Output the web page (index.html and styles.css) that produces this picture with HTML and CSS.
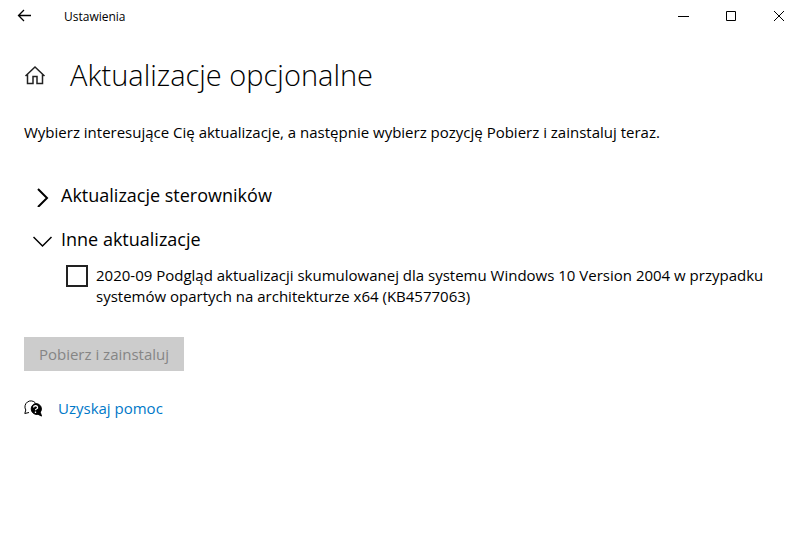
FILE: index.html
```html
<!DOCTYPE html>
<html lang="pl">
<head>
    <meta charset="UTF-8">
    <meta name="viewport" content="width=device-width, initial-scale=1.0">
    <title>Ustawienia</title>
    <link rel="stylesheet" href="styles.css">
</head>
<body>
    <header class="titlebar">
        <button type="button" class="back" aria-label="Wstecz">
            <svg width="14" height="14" viewBox="0 0 14 14"><path d="M14 6.500H1.500M7 1L1.500 6.500 7 12"/></svg>
        </button>
        <span class="app-name">Ustawienia</span>
        <div class="window-buttons">
            <button type="button" aria-label="Minimalizuj">
                <svg width="12" height="12" viewBox="0 0 12 12"><path d="M1 6.500h11"/></svg>
            </button>
            <button type="button" aria-label="Maksymalizuj">
                <svg width="12" height="12" viewBox="0 0 12 12"><path d="M1.500 1.500h9v9h-9z"/></svg>
            </button>
            <button type="button" aria-label="Zamknij">
                <svg width="12" height="12" viewBox="0 0 12 12"><path d="M1 1l10 10M11 1L1 11"/></svg>
            </button>
        </div>
    </header>

    <main class="content">
        <div class="heading">
            <a href="#" class="home" aria-label="Strona główna">
                <svg width="22" height="20" viewBox="0 0 22 20"><path d="M1.500 11L11 2l9.500 9M3.500 9.500V18.500H9v-7h4v7h5.500v-9"/></svg>
            </a>
            <h1>Aktualizacje opcjonalne</h1>
        </div>
        <p class="intro">Wybierz interesujące Cię aktualizacje, a następnie wybierz pozycję Pobierz i zainstaluj teraz.</p>

        <button type="button" class="group" aria-expanded="false">
            <svg class="closed" width="20" height="24" viewBox="0 0 20 24"><path d="M5 6l9 9-9 9"/></svg>
            <span>Aktualizacje sterowników</span>
        </button>
        <button type="button" class="group" aria-expanded="true">
            <svg class="open" width="20" height="24" viewBox="0 0 20 24"><path d="M.5 10l9 9 9-9"/></svg>
            <span>Inne aktualizacje</span>
        </button>
        <label class="update">
            <input type="checkbox">
            <span>2020-09 Podgląd aktualizacji skumulowanej dla systemu Windows 10 Version 2004 w przypadku systemów opartych na architekturze x64 (KB4577063)</span>
        </label>

        <button type="button" class="install" disabled>Pobierz i zainstaluj</button>

        <div class="help">
            <svg width="18" height="18" viewBox="0 0 18 18">
                <path d="M11.500 3A6 6 0 0 0 1.800 10L.8 13.500l4.200-1"/>
                <path class="bubble" d="M11.500 3.500a5.500 5.500 0 1 0 2.500 10.800l3.500 1.800-1.200-3.800a5.500 5.500 0 0 0-4.800-8.800z"/>
                <path class="mark" d="M9.600 7.500a2 1.700 0 1 1 2.800 1.500q-.9.400-.9 1.300M11.500 11.500v1.400"/>
            </svg>
            <a href="#">Uzyskaj pomoc</a>
        </div>
    </main>
</body>
</html>
```

FILE: styles.css
```css
* {
    box-sizing: border-box;
}
body {
    margin: 0;
    background: #fff;
    color: #000;
    font-family: 'Open Sans', 'Noto Sans', sans-serif;
    font-size: 15px;
    line-height: 21px;
}
button {
    padding: 0;
    border: none;
    background: none;
    color: inherit;
    font: inherit;
}
svg {
    flex: none;
    fill: none;
    stroke: #000;
}
.titlebar {
    display: flex;
    align-items: center;
    height: 32px;
    font-size: 12px;
}
.titlebar button {
    display: flex;
    align-items: center;
    justify-content: center;
    width: 42px;
    height: 32px;
}
.titlebar .back {
    width: 48px;
}
.back svg {
    stroke-width: 1.3;
}
.app-name {
    margin-left: 16px;
}
.window-buttons {
    display: flex;
    gap: 6px;
    margin-left: auto;
}
.content {
    padding: 24px;
}
.heading {
    display: flex;
    align-items: center;
    gap: 24px;
}
.home {
    display: flex;
}
.home svg {
    stroke: #222;
    stroke-width: 1.5;
}
h1 {
    margin: 0;
    font-size: 29px;
    font-weight: 300;
    line-height: 38px;
}
.intro {
    margin: 28px 0 30px;
}
.group {
    display: flex;
    align-items: center;
    gap: 8px;
    height: 44px;
    padding-left: 9px;
    font-size: 18px;
}
.closed {
    stroke-width: 2;
}
.open {
    stroke-width: 1.5;
}
.update {
    display: flex;
    gap: 8px;
    margin-top: 4px;
    padding-left: 42px;
}
.update input {
    appearance: none;
    flex: none;
    width: 22px;
    height: 22px;
    margin: 0;
    border: 2px solid #222;
}
.install {
    width: 160px;
    height: 34px;
    margin: 30px 0 27px;
    background: #ccc;
    color: #858585;
}
.help {
    display: flex;
    align-items: center;
    gap: 16px;
}
.help a {
    color: #0078c8;
    text-decoration: none;
}
.bubble {
    fill: #000;
}
.mark {
    stroke: #fff;
    stroke-width: 1.3;
}
```
